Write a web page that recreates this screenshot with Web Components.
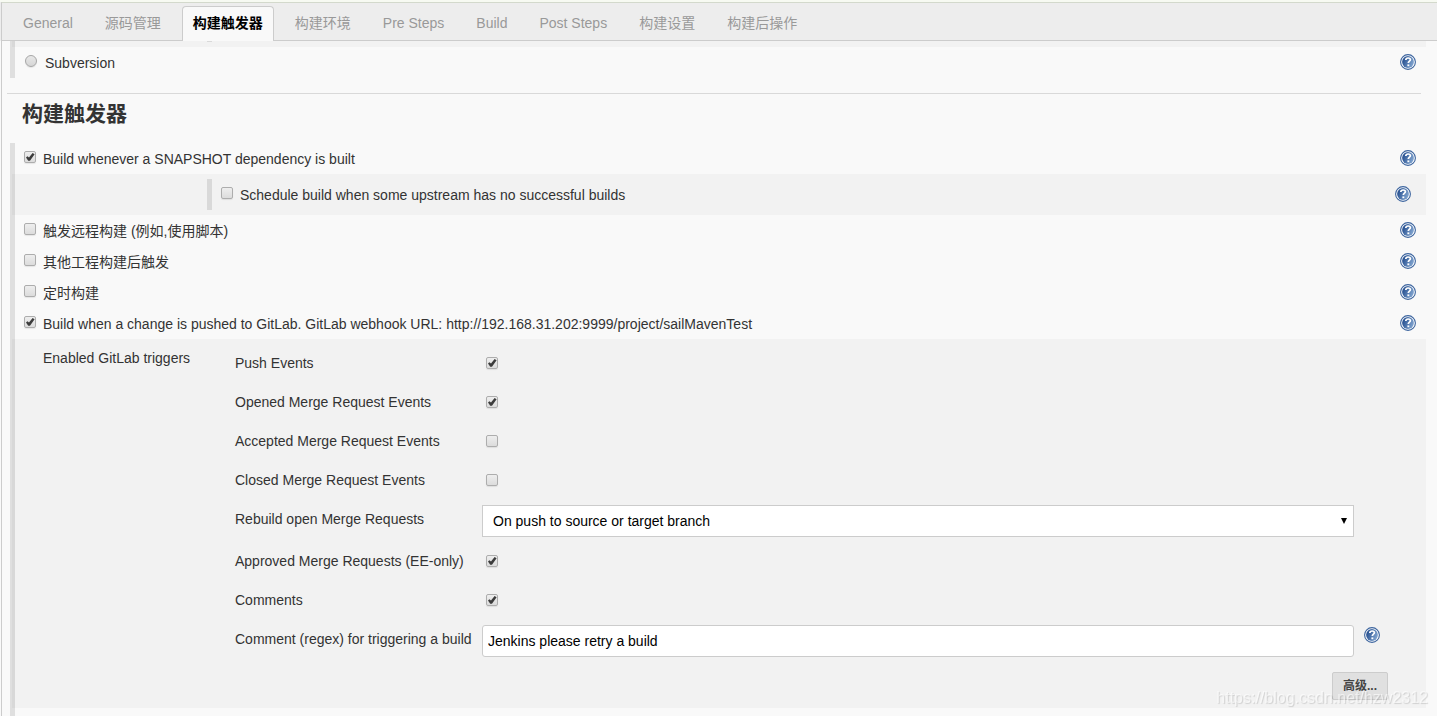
<!DOCTYPE html>
<html lang="zh-CN">
<head>
<meta charset="utf-8">
<title>构建触发器</title>
<style>
html { height: 100%; }
body { margin: 0; min-height: 100%; display: flex; flex-direction: column; background: #f9f9f9; color: #333; font: 14px/18px "Liberation Sans", Arial, "Noto Sans CJK SC", sans-serif; }
</style>
</head>
<body>
<config-page></config-page>

<script>
const define = (name, html, setup) => {
  const template = document.createElement('template');
  template.innerHTML = html;
  customElements.define(name, class extends HTMLElement {
    constructor() {
      super();
      this.attachShadow({ mode: 'open' }).append(template.content.cloneNode(true));
    }
    connectedCallback() {
      if (setup && !this.ready) { this.ready = true; setup(this, this.shadowRoot); }
    }
  });
};

/* Shared look of tick boxes and radios. */
const tickStyle = `
  input[type=checkbox], input[type=radio] {
    appearance: none; box-sizing: border-box; flex: none; width: 12px; height: 12px; margin: 0;
    border: 1px solid #adadad; border-radius: 2px; background: linear-gradient(#eee, #dcdcdc);
    box-shadow: 0 1px 1px rgba(0,0,0,.08);
  }
  input[type=radio] { border-radius: 50%; border-color: #a6a6a6; background: linear-gradient(#e8e8e8, #d6d6d6); }
  input[type=checkbox]:checked::before {
    content: ""; display: block; width: 10px; height: 10px; background: #3c3c3c;
    clip-path: polygon(10% 54%, 24% 42%, 40% 55%, 76% 10%, 96% 22%, 50% 88%, 32% 88%);
  }`;

define('help-button', `
  <style>
    :host { display: block; flex: none; width: 16px; height: 16px; }
    button { display: block; width: 16px; height: 16px; padding: 0; border: 0; background: none; }
    svg { display: block; }
  </style>
  <button type="button" aria-label="Help">
    <svg width="16" height="16" viewBox="0 0 16 16">
      <defs><linearGradient id="g" x1="0" y1="0.3" x2="1" y2="0.7"><stop offset="0.1" stop-color="#2c5594"/><stop offset="1" stop-color="#86a9d3"/></linearGradient></defs>
      <circle cx="8" cy="8" r="7.4" fill="#fff" stroke="#3c649e" stroke-width="1.1"/>
      <circle cx="8" cy="8" r="5.9" fill="url(#g)"/>
      <path d="M5.8 6C5.9 4.7 6.8 4 8.1 4s2.3.7 2.3 1.8c0 1.4-2.1 1.4-2.1 3.3" fill="none" stroke="#fff" stroke-width="1.7"/>
      <rect x="7.4" y="10.4" width="1.9" height="1.8" fill="#fff"/>
    </svg>
  </button>`);

define('config-tab', `
  <style>
    :host { display: block; box-sizing: border-box; height: 35px; padding: 0 10px; border: 1px solid transparent; border-bottom: 0; border-radius: 4px 4px 0 0; }
    a { display: block; line-height: 32px; color: #999; text-decoration: none; white-space: nowrap; }
    :host([active]) { background: #f9f9f9; border-color: #ccc; }
    :host([active]) a { color: #000; font-weight: bold; }
  </style>
  <a href="#"><slot></slot></a>`);

define('tab-bar', `
  <style>
    :host { display: block; position: sticky; top: 0; z-index: 1; border-top: 2px solid #f7faf2; background: #ededed; }
    nav { display: flex; gap: 10px; height: 34px; padding: 3px 10px 0; border-top: 1px solid #d3d9cc; border-bottom: 1px solid #ccc; margin-left: 1px; border-left: 1px solid #ccc; }
  </style>
  <nav><slot></slot></nav>`);

/* A vertical bar that gathers the options of one group. */
define('option-group', `
  <style>
    :host { display: block; margin: 0 11px 0 8px; border-left: 5px solid #dfdfdf; }
    :host([grow]) { flex: 1 0 auto; padding-bottom: 8px; }
  </style>
  <slot></slot>`);

/* A grey band with the settings that belong to the option above it. */
define('nested-band', `
  <style>:host { display: block; margin-left: -3px; background: rgba(0,0,0,.026); }</style>
  <slot></slot>`);

define('nested-group', `
  <style>
    :host { display: block; padding: 5px 5px 5px 195px; }
    div { border-left: 5px solid #d9d9d9; }
    :host([tail]) { padding-top: 0; }
    :host([tail]) div { height: 1px; }
  </style>
  <div><slot></slot></div>`);

define('option-row', `
  <style>${tickStyle}
    :host { display: flex; height: 31px; padding: 0 10px 0 9px; }
    label { display: flex; gap: 7px; flex: 1; line-height: 32px; white-space: nowrap; }
    input[type=checkbox], input[type=radio] { margin-top: 8px; }
    :host([radio]) { padding-left: 10px; }
    :host([radio]) label { gap: 8px; }
    help-button { margin-top: 7px; }
  </style>
  <label><input type="checkbox"><span><slot></slot></span></label>
  <help-button></help-button>`,
  (host, root) => {
    const input = root.querySelector('input');
    if (host.hasAttribute('radio')) input.type = 'radio';
    input.checked = host.hasAttribute('checked');
  });

/* Label on the left, control on the right. */
define('setting-row', `
  <style>${tickStyle}
    :host { display: grid; grid-template-columns: 247px 1fr 72px; min-height: 39px; align-items: start; }
    label { padding-top: 10px; white-space: nowrap; }
    input[type=checkbox] { margin: 13px 0 0 4px; }
    input[type=text], select { box-sizing: border-box; width: 100%; height: 32px; border: 1px solid #ccc; background: #fff; color: #000; font: inherit; display: block; }
    input[type=text] { margin: 5px 0; padding: 0 5px; border-radius: 3px; }
    .pick { position: relative; margin: 5px 0; }
    select { appearance: none; padding: 0 10px; border-radius: 0; }
    .pick svg { position: absolute; right: 7px; top: 13px; pointer-events: none; }
    help-button { margin: 7px 0 0 10px; }
  </style>
  <label for="control"><slot></slot></label>`,
  (host, root) => {
    const value = host.getAttribute('value');
    const controls = {
      check: '<input id="control" type="checkbox">',
      select: `<div class="pick"><select id="control"><option>${value}</option></select><svg width="6" height="6" viewBox="0 0 6 6"><path d="M0 0h6L3 6z" fill="#000"/></svg></div>`,
      text: `<input id="control" type="text" value="${value}"><help-button></help-button>`
    };
    const holder = document.createElement('template');
    holder.innerHTML = controls[host.getAttribute('type')];
    root.append(holder.content);
    if (host.hasAttribute('checked')) root.querySelector('input').checked = true;
  });

define('gitlab-settings', `
  <style>
    :host { display: grid; grid-template-columns: 192px 1fr; padding: 5px 0 8px 31px; }
    .title { padding-top: 5px; }
    .foot { display: flex; justify-content: flex-end; padding: 10px 38px 0 0; }
    button { height: 28px; padding: 0 10px; border: 1px solid #ccc; border-radius: 2px; background: #e0e0e0; color: #444; font: bold 12px/26px "Liberation Sans", "Noto Sans CJK SC", sans-serif; }
  </style>
  <div class="title">Enabled GitLab triggers</div>
  <div>
    <setting-row type="check" checked>Push Events</setting-row>
    <setting-row type="check" checked>Opened Merge Request Events</setting-row>
    <setting-row type="check">Accepted Merge Request Events</setting-row>
    <setting-row type="check">Closed Merge Request Events</setting-row>
    <setting-row type="select" value="On push to source or target branch">Rebuild open Merge Requests</setting-row>
    <setting-row type="check" checked>Approved Merge Requests (EE-only)</setting-row>
    <setting-row type="check" checked>Comments</setting-row>
    <setting-row type="text" value="Jenkins please retry a build">Comment (regex) for triggering a build</setting-row>
    <div class="foot"><button type="button">高级...</button></div>
  </div>`);

define('section-title', `
  <style>
    :host { display: block; margin: 15px 16px 0 5px; border-top: 1px solid #d9d9d9; }
    h2 { margin: 0; padding: 0 15px 9px; font-size: 21px; line-height: 40px; }
  </style>
  <h2><slot></slot></h2>`);

define('page-watermark', `
  <style>
    :host { position: fixed; right: 9px; bottom: 8px; z-index: 2; font-size: 16px; line-height: 20px; color: rgba(255,255,255,.6); text-shadow: 1px 1px 1px rgba(0,0,0,.14); pointer-events: none; }
  </style>
  <slot></slot>`);

define('config-page', `
  <style>
    :host { flex: 1; display: flex; flex-direction: column; }
    main { flex: 1; display: flex; flex-direction: column; margin-left: 1px; border-left: 1px solid #ccc; }
  </style>
  <tab-bar>
    <config-tab>General</config-tab>
    <config-tab>源码管理</config-tab>
    <config-tab active>构建触发器</config-tab>
    <config-tab>构建环境</config-tab>
    <config-tab>Pre Steps</config-tab>
    <config-tab>Build</config-tab>
    <config-tab>Post Steps</config-tab>
    <config-tab>构建设置</config-tab>
    <config-tab>构建后操作</config-tab>
  </tab-bar>
  <main>
    <option-group>
      <nested-band><nested-group tail></nested-group></nested-band>
      <option-row radio>Subversion</option-row>
    </option-group>
    <section-title>构建触发器</section-title>
    <option-group grow>
      <option-row checked>Build whenever a SNAPSHOT dependency is built</option-row>
      <nested-band>
        <nested-group><option-row>Schedule build when some upstream has no successful builds</option-row></nested-group>
      </nested-band>
      <option-row>触发远程构建 (例如,使用脚本)</option-row>
      <option-row>其他工程构建后触发</option-row>
      <option-row>定时构建</option-row>
      <option-row checked>Build when a change is pushed to GitLab. GitLab webhook URL: http://192.168.31.202:9999/project/sailMavenTest</option-row>
      <nested-band><gitlab-settings></gitlab-settings></nested-band>
    </option-group>
  </main>
  <page-watermark>https://blog.csdn.net/hzw2312</page-watermark>`);
</script>
</body>
</html>
